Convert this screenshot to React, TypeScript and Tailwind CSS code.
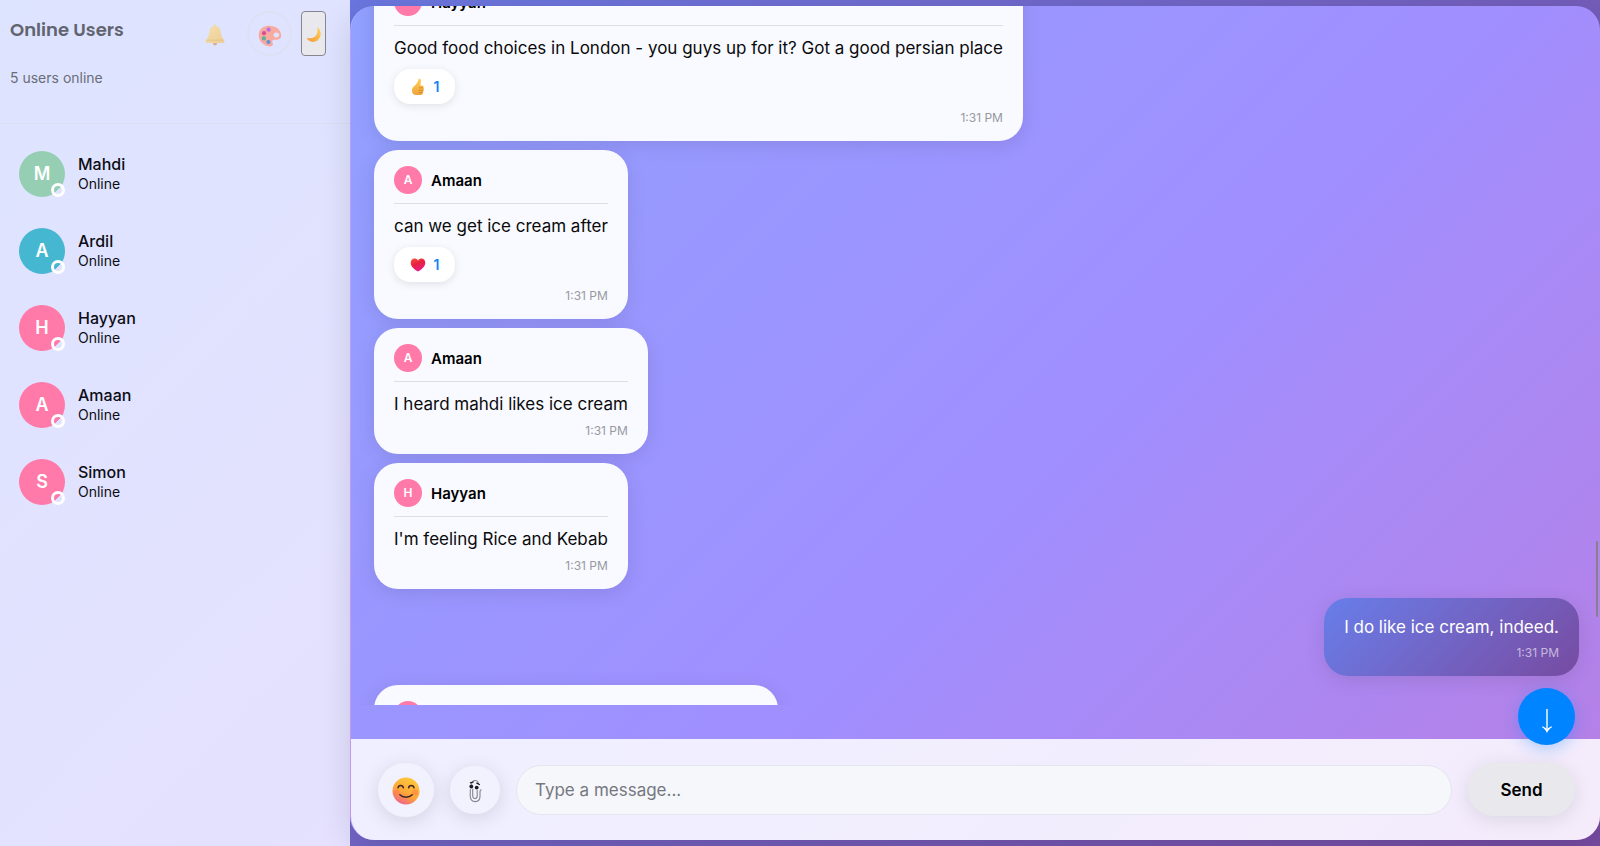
import React, { useLayoutEffect, useRef } from "react";

const users = [
  { name: "Mahdi", color: "bg-[#96ceb4]" },
  { name: "Ardil", color: "bg-[#45b7d1]" },
  { name: "Hayyan", color: "bg-[#ff7aa8]" },
  { name: "Amaan", color: "bg-[#ff7aa8]" },
  { name: "Simon", color: "bg-[#ff7aa8]" },
];

function BellIcon() {
  return (
    <svg viewBox="0 0 20 22" className="w-5 h-[22px]">
      <defs>
        <linearGradient id="bell" x1="0" y1="0" x2="1" y2="1">
          <stop offset="0" stopColor="#ffe07a" />
          <stop offset="1" stopColor="#fbc04c" />
        </linearGradient>
      </defs>
      <circle cx="10" cy="19.4" r="2" fill="#d98a3a" />
      <path
        d="M10 .6c.9 0 1.3.6 1.3 1.4 3 .9 4.2 3.2 4.5 6.3.3 3 .8 4.900 2.300 6.500.8.8 1.300 1.700 1.300 2.600 0 1-.7 1.600-1.900 1.600H2.500c-1.200 0-1.900-.6-1.900-1.600 0-.9.5-1.800 1.300-2.600 1.500-1.600 2-3.500 2.300-6.500C4.500 5.200 5.700 2.900 8.700 2c0-.8.4-1.400 1.300-1.400Z"
        fill="url(#bell)"
      />
      <path d="M1.5 16.2h17" stroke="#d99a3f" strokeWidth=".8" opacity=".7" />
    </svg>
  );
}

function PaletteIcon() {
  return (
    <svg viewBox="0 0 24 22" className="w-6 h-[22px]">
      <path
        d="M11 .8C4.800.8.700 4.900.700 10.200c0 5.400 4 9.500 8.600 10.900 2.800.9 5.300.5 5.600-1.500.2-1.500-1-2.400-.6-3.600.5-1.600 3-.8 5.600-1.400 2.300-.5 3.500-2 3.300-4.600C22.800 4.500 17.600.8 11 .8Zm7.300 6.600c1.800 0 2.900 1.200 2.900 2.600s-1.100 2.500-2.900 2.500-2.800-1.100-2.800-2.500 1-2.600 2.800-2.600Z"
        fill="#ff9d8a"
      />
      <circle cx="10.6" cy="4.7" r="2.1" fill="#b052d8" />
      <circle cx="6" cy="8.2" r="2.1" fill="#d8287a" />
      <circle cx="5.8" cy="13.4" r="2.1" fill="#35a87c" />
      <circle cx="10.4" cy="17" r="2.1" fill="#3f7fd0" />
    </svg>
  );
}

function MoonIcon() {
  return (
    <svg viewBox="0 0 16 16" className="w-4 h-4">
      <defs>
        <linearGradient id="moon" x1="1" y1="0" x2="0" y2="1">
          <stop offset="0" stopColor="#ffd257" />
          <stop offset="1" stopColor="#f29a3a" />
        </linearGradient>
      </defs>
      <path
        d="M12.200.8c2.300 2.400 3.200 6.100 1.900 9.200-1.300 3.200-4.200 4.900-7.300 4.900C4 14.900 1.800 13.400 1 11.600c-.2-.5.2-.8.7-.7 3.200.8 6.700-.2 8.600-3 1.400-2.100 1.500-4.300 1.100-6.600-.1-.6.4-.9.800-.5Z"
        fill="url(#moon)"
      />
    </svg>
  );
}

function ThumbIcon() {
  return (
    <svg viewBox="0 0 16 18" className="w-4 h-[18px]">
      <defs>
        <linearGradient id="thumb" x1="0" y1="0" x2="0" y2="1">
          <stop offset="0" stopColor="#ffd04f" />
          <stop offset="1" stopColor="#f0a23c" />
        </linearGradient>
      </defs>
      <path
        d="M8.6 1c.8-.7 2-.2 2.200 1 .3 1.900-.2 3.600-.4 5.400h1.500c1.500 0 2.200 1.300 1.500 2.300.7.7.7 1.800 0 2.400.5.8.2 1.800-.5 2.200.1 1.600-.8 2.700-2.500 2.700H6.200C3.500 17 2 15.300 2 12.700c0-2.500 1-3.700 2.600-4.900C6.500 6.300 8.100 3.600 8.600 1Z"
        fill="url(#thumb)"
      />
      <path d="M9 9.800h4.200M8.800 12.300h4.400M8.800 14.700h3.800" stroke="#c97a28" strokeWidth=".7" fill="none" />
    </svg>
  );
}

function HeartIcon() {
  return (
    <svg viewBox="0 0 18 16" className="w-4 h-3.5">
      <defs>
        <linearGradient id="heart" x1="0" y1="0" x2=".5" y2="1">
          <stop offset="0" stopColor="#f8503c" />
          <stop offset=".5" stopColor="#e8213f" />
          <stop offset="1" stopColor="#e81e88" />
        </linearGradient>
      </defs>
      <path
        d="M9 3.100C10 1.300 11.500.700 13 .700c2.500 0 4.300 2 4.300 4.600 0 4.300-4.300 7.800-7.500 9.700-.5.300-1.100.3-1.600 0C5 13.100.700 9.600.700 5.300.700 2.700 2.500.700 5 .700c1.500 0 3 .6 4 2.400Z"
        fill="url(#heart)"
      />
    </svg>
  );
}

function SmileIcon() {
  return (
    <svg viewBox="0 0 28 28" className="w-7 h-7">
      <defs>
        <linearGradient id="smile" x1=".8" y1="0" x2=".3" y2="1">
          <stop offset="0" stopColor="#ffcb3d" />
          <stop offset=".6" stopColor="#fda637" />
          <stop offset="1" stopColor="#f0608c" />
        </linearGradient>
      </defs>
      <circle cx="14" cy="14" r="13.5" fill="url(#smile)" />
      <circle cx="4.8" cy="15.5" r="3" fill="#ff7a4a" opacity=".5" />
      <circle cx="23.2" cy="15.5" r="3" fill="#ff7a4a" opacity=".5" />
      <path
        d="M6 10.800c.4-3.200 5-3.200 5.400 0M16.600 10.800c.4-3.200 5-3.200 5.400 0M7.800 17.800c3 3.200 9.400 3.200 12.400 0"
        fill="none"
        stroke="#43282b"
        strokeWidth="1.5"
        strokeLinecap="round"
      />
    </svg>
  );
}

function ClipIcon() {
  return (
    <svg viewBox="0 0 14 24" className="w-3.5 h-6">
      <path
        d="M3.500 5C4 2.500 6 1.200 8 1.500c1.400.3 2.200 1.400 2.300 3M2.300 10.500 2.200 17c.2 3.800 2.200 5.600 4.900 5.600 3.100 0 4.900-2.300 4.900-5.300v-4.500c0-1.200.4-1.800 1.200-2M4.700 10v7c.2 1.800 1 2.500 2.200 2.500 1.400 0 2.300-1 2.300-2.800v-5.200"
        fill="none"
        stroke="#85858d"
        strokeWidth="1.1"
        strokeLinecap="round"
      />
      <circle cx="3.3" cy="7.5" r="1.9" fill="#1d1d20" />
      <circle cx="8.7" cy="8.6" r="1.9" fill="#1d1d20" />
      <path d="M2.400 3.900 5.200 3M8.800 4.200l2.600 1.300" stroke="#1d1d20" strokeWidth="1.3" strokeLinecap="round" />
    </svg>
  );
}

function ArrowIcon() {
  return (
    <svg viewBox="0 0 12 26" className="w-3 h-[26px]">
      <path d="M6 1v21" stroke="white" strokeWidth="1.4" />
      <path
        d="M6 25C5 22.500 3.300 20.600 1 19.300l.6-1C3.600 19.200 5 20.300 6 21.600c1-1.300 2.400-2.400 4.400-3.300l.6 1C8.700 20.600 7 22.500 6 25Z"
        fill="white"
      />
    </svg>
  );
}

function UserItem({ name, color }: { name: string; color: string }) {
  return (
    <li className="flex items-center gap-[13px] h-[77px] px-[19px]">
      <div
        className={`relative flex items-center justify-center w-[46px] h-[46px] rounded-full text-white text-lg font-semibold ${color}`}
      >
        {name[0]}
        <span className="absolute right-0 bottom-0 w-3.5 h-3.5 rounded-full border-3 border-white bg-linear-135 from-transparent from-50% to-[#e0e3ff] to-50%" />
      </div>
      <div className="text-[#0c0d14]">
        <div className="text-base leading-5 font-medium">{name}</div>
        <div className="text-sm leading-5">Online</div>
      </div>
    </li>
  );
}

function Sidebar() {
  return (
    <aside className="flex flex-col shrink-0 w-[350px] bg-linear-135 from-[#dde4ff] to-[#e5e1ff]">
      <header className="h-[124px] pl-2.5 pr-6 pt-[11px] border-b border-[#dbdff3]">
        <div className="flex items-start justify-between">
          <h2 className="pt-[5px] text-lg leading-7 font-semibold text-[#61646f] font-[Poppins,Inter,sans-serif]">
            Online Users
          </h2>
          <div className="flex items-center gap-[9px]">
            <button
              aria-label="Notifications"
              className="flex items-center justify-center w-[46px] h-[45px] pt-0.5 opacity-60"
            >
              <BellIcon />
            </button>
            <button
              aria-label="Theme"
              className="flex items-center justify-center w-[45px] h-[45px] rounded-full border-2 border-[#dde1f4]"
            >
              <span className="opacity-80 pt-1">
                <PaletteIcon />
              </span>
            </button>
            <button
              aria-label="Dark mode"
              className="flex items-center justify-center w-[25px] h-[45px] pt-0.5 rounded border border-[#85868f] bg-[#e9e9ed]"
            >
              <MoonIcon />
            </button>
          </div>
        </div>
        <p className="pt-3 text-sm leading-5 text-[#6a6d78]">5 users online</p>
      </header>
      <ul className="pt-[11px]">
        {users.map((user) => (
          <UserItem key={user.name} {...user} />
        ))}
      </ul>
    </aside>
  );
}

type MessageProps = {
  name: string;
  text: string;
  reaction?: React.ReactNode;
};

function Message({ name, text, reaction }: MessageProps) {
  return (
    <article className="self-start shrink-0 px-5 pt-4 pb-[13px] rounded-3xl bg-[#f9faff] shadow-[0_4px_20px_rgba(0,0,0,0.1)]">
      <div className="flex items-center gap-[9px] pb-[9px] border-b border-[#dedfe5]">
        <span className="flex items-center justify-center w-7 h-7 rounded-full bg-[#ff7aa8] text-white text-xs font-semibold">
          {name[0]}
        </span>
        <span className="pt-0.5 text-[15px] leading-5 font-semibold text-black">{name}</span>
      </div>
      <p className="pt-2 text-[17px] leading-7 text-[#0a0a0c]">{text}</p>
      {reaction && (
        <button className="flex items-center justify-center gap-2 w-[61px] h-[35px] mt-[7px] mb-px rounded-2xl bg-white shadow-[0_2px_8px_rgba(0,0,0,0.1)] text-sm font-semibold text-[#0f84f5]">
          {reaction}1
        </button>
      )}
      <time className="block pt-[3px] text-right text-xs leading-5 text-[#97989f]">1:31 PM</time>
    </article>
  );
}

function MessageList() {
  const listRef = useRef<HTMLDivElement>(null);

  useLayoutEffect(() => {
    if (listRef.current) listRef.current.scrollTop = 34;
  }, []);

  return (
    <div
      ref={listRef}
      className="flex flex-col gap-[9px] flex-1 min-h-0 pl-[23px] pr-[21px] overflow-y-auto [scrollbar-width:none]"
    >
      <Message
        name="Hayyan"
        text="Good food choices in London - you guys up for it? Got a good persian place"
        reaction={<ThumbIcon />}
      />
      <Message name="Amaan" text="can we get ice cream after" reaction={<HeartIcon />} />
      <Message name="Amaan" text="I heard mahdi likes ice cream" />
      <Message name="Hayyan" text="I'm feeling Rice and Kebab" />
      <article className="self-end shrink-0 px-5 pt-[15px] pb-[13px] rounded-3xl bg-linear-135 from-[#667eea] to-[#764ba2] shadow-[0_4px_20px_rgba(0,0,0,0.1)] text-white">
        <p className="text-[17px] leading-7">I do like ice cream, indeed.</p>
        <time className="block pt-0.5 text-right text-xs leading-5 text-white/60">1:31 PM</time>
      </article>
      <Message name="Amaan" text="Kebab place near the station looks great too!!" />
    </div>
  );
}

function Composer() {
  return (
    <form className="relative flex items-center gap-4 h-[101px] pl-[27px] pr-[25px] bg-white/85">
      <button
        type="button"
        aria-label="Emoji"
        className="flex items-center justify-center w-14 h-[54px] pt-0.5 rounded-full bg-[#f1f2fe] shadow-[0_4px_20px_rgba(0,0,0,0.12)]"
      >
        <SmileIcon />
      </button>
      <button
        type="button"
        aria-label="Attach file"
        className="flex items-center justify-center w-[50px] h-12 pt-0.5 rounded-full bg-[#f1f2fe] shadow-[0_4px_20px_rgba(0,0,0,0.12)]"
      >
        <ClipIcon />
      </button>
      <input
        type="text"
        aria-label="Message"
        placeholder="Type a message..."
        className="flex-1 min-w-0 h-[50px] px-[18px] rounded-full border border-[#e4e5ee] bg-[#f5f7fb] text-[17px] placeholder:text-[#757780]"
      />
      <button
        type="submit"
        className="w-[107px] h-[53px] pt-0.5 rounded-full bg-[#e9e9ed] shadow-[0_4px_20px_rgba(0,0,0,0.1)] text-[17px] font-semibold text-black"
      >
        Send
      </button>
      <button
        type="button"
        aria-label="Scroll to bottom"
        className="absolute right-[25px] -top-[51px] flex items-center justify-center w-[57px] h-[57px] pt-2 rounded-full bg-[#0084ff] shadow-[0_4px_16px_rgba(0,132,255,0.3)]"
      >
        <ArrowIcon />
      </button>
    </form>
  );
}

function App() {
  return (
    <div className="flex h-screen font-[Inter,sans-serif] bg-linear-135 from-[#667eea] to-[#764ba2]">
      <Sidebar />
      <main className="relative flex flex-col flex-1 min-w-0 my-1.5 rounded-3xl overflow-hidden border-l border-white/20 bg-linear-135 from-[#91a0ff] via-[#a08fff] via-55% to-[#b67fe4] shadow-[0_8px_32px_rgba(0,0,0,0.12)]">
        <MessageList />
        <div className="h-[34px] shrink-0" />
        <Composer />
        <div className="absolute right-0.5 top-[535px] w-0.5 h-[76px] rounded-full bg-[#85818f]" />
      </main>
    </div>
  );
}

export default App;
